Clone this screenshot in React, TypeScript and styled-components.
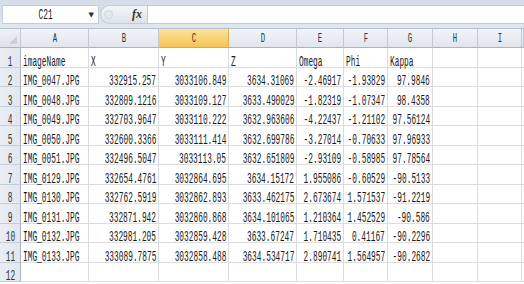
import { Fragment } from 'react'
import styled, { createGlobalStyle } from 'styled-components'

const GlobalStyle = createGlobalStyle`
  html, body {
    margin: 0;
    padding: 0;
    background: #ffffff;
  }
  * {
    box-sizing: border-box;
  }
`

const COLUMNS = ['A', 'B', 'C', 'D', 'E', 'F', 'G', 'H', 'I', '']
const WIDTHS = [21, 68, 70, 70, 68, 47, 44, 45, 45, 44, 2]

const HEADER_ROW = ['imageName', 'X', 'Y', 'Z', 'Omega', 'Phi', 'Kappa']

const DATA = [
  ['IMG_0047.JPG', '332915.257', '3033106.849', '3634.31069', '-2.46917', '-1.93829', '97.9846'],
  ['IMG_0048.JPG', '332809.1216', '3033109.127', '3633.490029', '-1.82319', '-1.07347', '98.4358'],
  ['IMG_0049.JPG', '332703.9647', '3033110.222', '3632.963606', '-4.22437', '-1.21102', '97.56124'],
  ['IMG_0050.JPG', '332600.3366', '3033111.414', '3632.699786', '-3.27014', '-0.70633', '97.96933'],
  ['IMG_0051.JPG', '332496.5047', '3033113.05', '3632.651809', '-2.93109', '-0.58985', '97.78564'],
  ['IMG_0129.JPG', '332654.4761', '3032864.695', '3634.15172', '1.955086', '-0.60529', '-90.5133'],
  ['IMG_0130.JPG', '332762.5919', '3032862.893', '3633.462175', '2.673674', '1.571537', '-91.2219'],
  ['IMG_0131.JPG', '332871.942', '3032860.868', '3634.101065', '1.210364', '1.452529', '-90.586'],
  ['IMG_0132.JPG', '332981.205', '3032859.428', '3633.67247', '1.710435', '0.41167', '-90.2296'],
  ['IMG_0133.JPG', '333089.7875', '3032858.488', '3634.534717', '2.890741', '1.564957', '-90.2682'],
]

const Window = styled.div`
  width: 524px;
  height: 284px;
  overflow: hidden;
  display: flex;
  flex-direction: column;
  background: #ffffff;
  font-family: 'Liberation Mono', 'DejaVu Sans Mono', monospace;
`

const FormulaBar = styled.div`
  flex: none;
  display: flex;
  align-items: stretch;
  height: 29px;
  padding: 5px 0 4px 2px;
  background: linear-gradient(#d5dce8, #e1e7ef);
  border-bottom: 1px solid #b3bdcc;
`

const NameBox = styled.div`
  width: 97px;
  display: flex;
  align-items: center;
  background: #ffffff;
  border: 1px solid #c3ccd9;
  padding: 0 4px 0 0;
`

const NameText = styled.div`
  flex: 1;
  text-align: center;
  font-size: 14px;
  color: #222;
`

const Squeeze = styled.span<{ $origin?: string; $drop?: number }>`
  display: inline-block;
  transform: translateY(${(p) => p.$drop || 0}px) scaleX(0.56);
  transform-origin: ${(p) => p.$origin || 'center'};
  white-space: nowrap;
`

const DropArrow = styled.span`
  font-size: 7px;
  color: #333;
  font-family: 'DejaVu Sans', sans-serif;
`

const FxPill = styled.div`
  width: 47px;
  margin-left: 1px;
  display: flex;
  align-items: center;
  justify-content: space-between;
  padding: 0 5px 0 3px;
  border-radius: 10px 0 0 10px;
  background: linear-gradient(#f4f6f9, #dde2ea);
  border: 1px solid #c3ccd9;
  border-right: none;
`

const FadedDot = styled.span`
  width: 9px;
  height: 9px;
  border-radius: 50%;
  background: #e4e8ee;
  border: 1px solid #d0d6df;
`

const FxLabel = styled.span`
  font-family: 'Liberation Serif', serif;
  font-style: italic;
  font-weight: bold;
  font-size: 12px;
  color: #333;
`

const FormulaInput = styled.div`
  flex: 1;
  background: #ffffff;
  border: 1px solid #c3ccd9;
  border-right: none;
`

const Sheet = styled.div`
  flex: 1;
  display: grid;
  grid-template-columns: ${WIDTHS.map((w) => `${w}px`).join(' ')};
  grid-template-rows: 19px repeat(12, 19.5px);
  align-content: start;
  background: #ffffff;
`

const Corner = styled.div`
  position: relative;
  background: linear-gradient(#eef1f6, #dfe4ec);
  border-right: 1px solid #c1c9d5;
  border-bottom: 1px solid #a9b3c2;

  &::after {
    content: '';
    position: absolute;
    right: 3px;
    bottom: 3px;
    border-style: solid;
    border-width: 0 0 8px 8px;
    border-color: transparent transparent #c9d0da transparent;
  }
`

const ColHeader = styled.div<{ $selected?: boolean }>`
  display: flex;
  align-items: center;
  justify-content: center;
  font-size: 13px;
  color: ${(p) => (p.$selected ? '#333' : '#2c3440')};
  background: ${(p) =>
    p.$selected
      ? 'linear-gradient(#fbe3a0, #f6c453)'
      : 'linear-gradient(#f2f4f8, #e1e6ed)'};
  border-right: 1px solid ${(p) => (p.$selected ? '#e2b24a' : '#c1c9d5')};
  border-bottom: 1px solid ${(p) => (p.$selected ? '#e0a93a' : '#a9b3c2')};
`

const RowHeader = styled.div`
  display: flex;
  align-items: flex-end;
  justify-content: center;
  font-size: 14px;
  line-height: 14px;
  color: #2c3440;
  background: linear-gradient(90deg, #eaeef4, #e2e7ee);
  border-right: 1px solid #a9b3c2;
  border-bottom: 1px solid #c6ced9;
`

const Cell = styled.div<{ $align?: 'left' | 'right' }>`
  display: flex;
  align-items: flex-end;
  justify-content: ${(p) => (p.$align === 'right' ? 'flex-end' : 'flex-start')};
  padding: 0 2px 0 2px;
  font-size: 14px;
  line-height: 14px;
  color: #1a1a1a;
  border-right: 1px solid #dadcdf;
  border-bottom: 1px solid #dadcdf;
`

const NCOLS = WIDTHS.length - 1

const App = () => {
  const rows: string[][] = [HEADER_ROW, ...DATA, []]

  return (
    <>
      <GlobalStyle />
      <Window>
        <FormulaBar>
          <NameBox>
            <NameText>
              <Squeeze>C21</Squeeze>
            </NameText>
            <DropArrow>▼</DropArrow>
          </NameBox>
          <FxPill>
            <FadedDot />
            <FxLabel>fx</FxLabel>
          </FxPill>
          <FormulaInput />
        </FormulaBar>
        <Sheet>
          <Corner />
          {COLUMNS.map((c, i) => (
            <ColHeader key={i} $selected={c === 'C'}>
              <Squeeze>{c}</Squeeze>
            </ColHeader>
          ))}
          {rows.map((row, r) => (
            <Fragment key={r}>
              <RowHeader>
                <Squeeze $drop={2}>{r + 1}</Squeeze>
              </RowHeader>
              {Array.from({ length: NCOLS }).map((_, c) => {
                const v = row[c] || ''
                const right = r > 0 && c > 0
                return (
                  <Cell key={c} $align={right ? 'right' : 'left'}>
                    <Squeeze $origin={right ? 'right' : 'left'} $drop={2}>
                      {v}
                    </Squeeze>
                  </Cell>
                )
              })}
            </Fragment>
          ))}
        </Sheet>
      </Window>
    </>
  )
}

export default App
